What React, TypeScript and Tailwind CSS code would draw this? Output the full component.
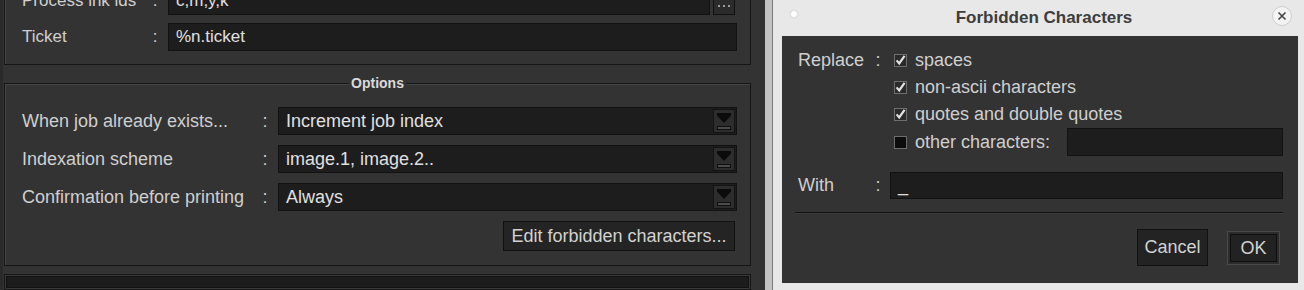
import React from 'react';

const ComboArrow = () => (
  <div className="w-[22px] my-[1px] mr-[1px] border border-[#141414] bg-[#2d2d2d] flex flex-col items-center justify-center gap-[3px]">
    <svg width="14" height="10" viewBox="0 0 14 10">
      <path d="M0 0H14V2.5L7 10L0 2.5Z" fill="#0b0b0b" />
    </svg>
    <div className="w-[14px] h-[4px] border border-[#0f0f0f] bg-[#4b4b4b]" />
  </div>
);

const Check = ({ on }: { on: boolean }) => (
  <svg width="13" height="13" viewBox="0 0 13 13" className="shrink-0">
    <rect x="0.5" y="0.5" width="12" height="12" fill={on ? '#2a2a2a' : '#0c0c0c'} stroke="#6e6e6e" />
    {on && <path d="M2.6 6.4L5.2 9.4L10.6 1.8" fill="none" stroke="#e2e2e2" strokeWidth="2.2" />}
  </svg>
);

const FormRow = ({ label, labelClass, children }: { label: string; labelClass: string; children: React.ReactNode }) => (
  <div className="flex items-center h-[28px]">
    <span className={`shrink-0 whitespace-nowrap ${labelClass}`}>{label}</span>
    <span className="w-[10px] text-center shrink-0">:</span>
    <div className="ml-[8px] flex-1 flex h-full">{children}</div>
  </div>
);

const Field = ({ value, combo }: { value: string; combo?: boolean }) => (
  <div className="flex-1 flex border border-[#121212] bg-[#1d1d1d] text-[#e0e0e0]">
    <span className="flex-1 flex items-center pl-[7px]">{value}</span>
    {combo && <ComboArrow />}
  </div>
);

export default function App() {
  return (
    <div className="w-[1304px] h-[290px] overflow-hidden flex bg-[#333] font-['Liberation_Sans',Arial,sans-serif] text-[18px] text-[#cfcfcf]">
      {/* Settings panel */}
      <div className="w-[765px] shrink-0 flex flex-col border-l-[3px] border-[#2a2a2a]">
        <div className="mt-[-30px] ml-[1px] w-[747px] border border-[#151515] shadow-[inset_1px_1px_0_#464646] pt-[16px] pb-[13px] pl-[17px] pr-[13px] flex flex-col gap-[8px] text-[17px]">
          <FormRow label="Process ink ids" labelClass="w-[128px]">
            <Field value="c,m,y,k" />
            <div className="ml-[3px] mr-[2px] w-[22px] border border-[#111] bg-[#2b2b2b] flex items-end justify-center gap-[3px] pb-[7px]">
              <span className="w-[2px] h-[2px] bg-[#9a9a9a]" />
              <span className="w-[2px] h-[2px] bg-[#9a9a9a]" />
              <span className="w-[2px] h-[2px] bg-[#9a9a9a]" />
            </div>
          </FormRow>
          <FormRow label="Ticket" labelClass="w-[128px]">
            <Field value="%n.ticket" />
          </FormRow>
        </div>

        <div className="relative mt-[18px] ml-[1px] w-[747px] border border-[#151515] shadow-[inset_1px_1px_0_#464646] pt-[23px] pb-[14px] pl-[17px] pr-[13px] flex flex-col gap-[10px]">
          <span className="absolute -top-[9px] left-1/2 -translate-x-1/2 bg-[#333] px-[3px] text-[14px] leading-[16px] font-bold text-[#dadada]">Options</span>
          <FormRow label="When job already exists..." labelClass="w-[238px]">
            <Field value="Increment job index" combo />
          </FormRow>
          <FormRow label="Indexation scheme" labelClass="w-[238px]">
            <Field value="image.1, image.2.." combo />
          </FormRow>
          <FormRow label="Confirmation before printing" labelClass="w-[238px]">
            <Field value="Always" combo />
          </FormRow>
          <div className="flex justify-end">
            <button className="mr-[2px] h-[30px] w-[232px] border border-[#111] bg-[#242424] text-[#d2d2d2] whitespace-nowrap">Edit forbidden characters...</button>
          </div>
        </div>

        <div className="mt-[8px] ml-[1px] w-[747px] h-[40px] border border-[#151515] p-[1px] bg-[#3a3a3a]">
          <div className="h-full border border-[#111] bg-[#1c1c1c]" />
        </div>
      </div>

      {/* Dialog */}
      <div className="w-[7px] shrink-0 bg-[#c3c3c3]" />
      <div className="flex-1 flex flex-col bg-[#e8e8e8] border-l border-[#7a7a7a]">
        <div className="h-[36px] shrink-0 flex items-start">
          <span className="ml-[18px] mt-[11px] w-[6px] h-[6px] rounded-full bg-white shadow-[0_0_2px_#bdbdbd]" />
          <span className="flex-1 text-center pl-[19px] pt-[7px] leading-[22px] text-[17px] font-bold text-[#3d3d3d]">Forbidden Characters</span>
          <span className="mr-[12px] mt-[6px] w-[20px] h-[20px] rounded-full bg-[#f3f3f3] border border-[#cdcdcd] flex items-center justify-center">
            <svg width="10" height="10" viewBox="0 0 10 10">
              <path d="M1.5 1.5L8.5 8.5M8.5 1.5L1.5 8.5" stroke="#4a4a4a" strokeWidth="1.7" />
            </svg>
          </span>
        </div>

        <div className="flex-1 ml-[9px] mr-[6px] mb-[7px] bg-[#333] pt-[11px] pl-[16px] pr-[15px] flex flex-col">
          <div className="flex">
            <span className="w-[74px] h-[27px] flex items-center">Replace</span>
            <span className="w-[12px] h-[27px] flex items-center justify-center">:</span>
            <div className="ml-[6px] flex-1 flex flex-col">
              {['spaces', 'non-ascii characters', 'quotes and double quotes'].map((t) => (
                <div key={t} className="h-[27px] flex items-center gap-[8px] pl-[4px]">
                  <Check on />
                  <span>{t}</span>
                </div>
              ))}
              <div className="h-[28px] flex items-center gap-[8px] pl-[4px]">
                <Check on={false} />
                <span>other characters:</span>
                <div className="ml-auto w-[216px] h-full border border-[#121212] bg-[#1d1d1d]" />
              </div>
            </div>
          </div>

          <div className="mt-[16px] flex h-[27px] items-center">
            <span className="w-[74px]">With</span>
            <span className="w-[12px] text-center">:</span>
            <div className="ml-[6px] flex-1 h-full border border-[#121212] bg-[#1d1d1d] pl-[7px] flex items-center text-[#e0e0e0]">_</div>
          </div>

          <div className="mt-[13px] -ml-[3px] border-t border-[#111] border-b border-b-[#3c3c3c]" />

          <div className="mt-[15px] flex justify-end items-center gap-[19px] pr-[3px]">
            <button className="w-[71px] h-[37px] border border-[#111] bg-[#232323] text-[#d2d2d2]">Cancel</button>
            <div className="w-[53px] h-[34px] border border-[#4a4a4a] bg-[#2c2c2c] p-[2px]">
              <button className="w-full h-full border border-[#0f0f0f] bg-[#222] text-[#d2d2d2]">OK</button>
            </div>
          </div>
        </div>
      </div>
    </div>
  );
}
